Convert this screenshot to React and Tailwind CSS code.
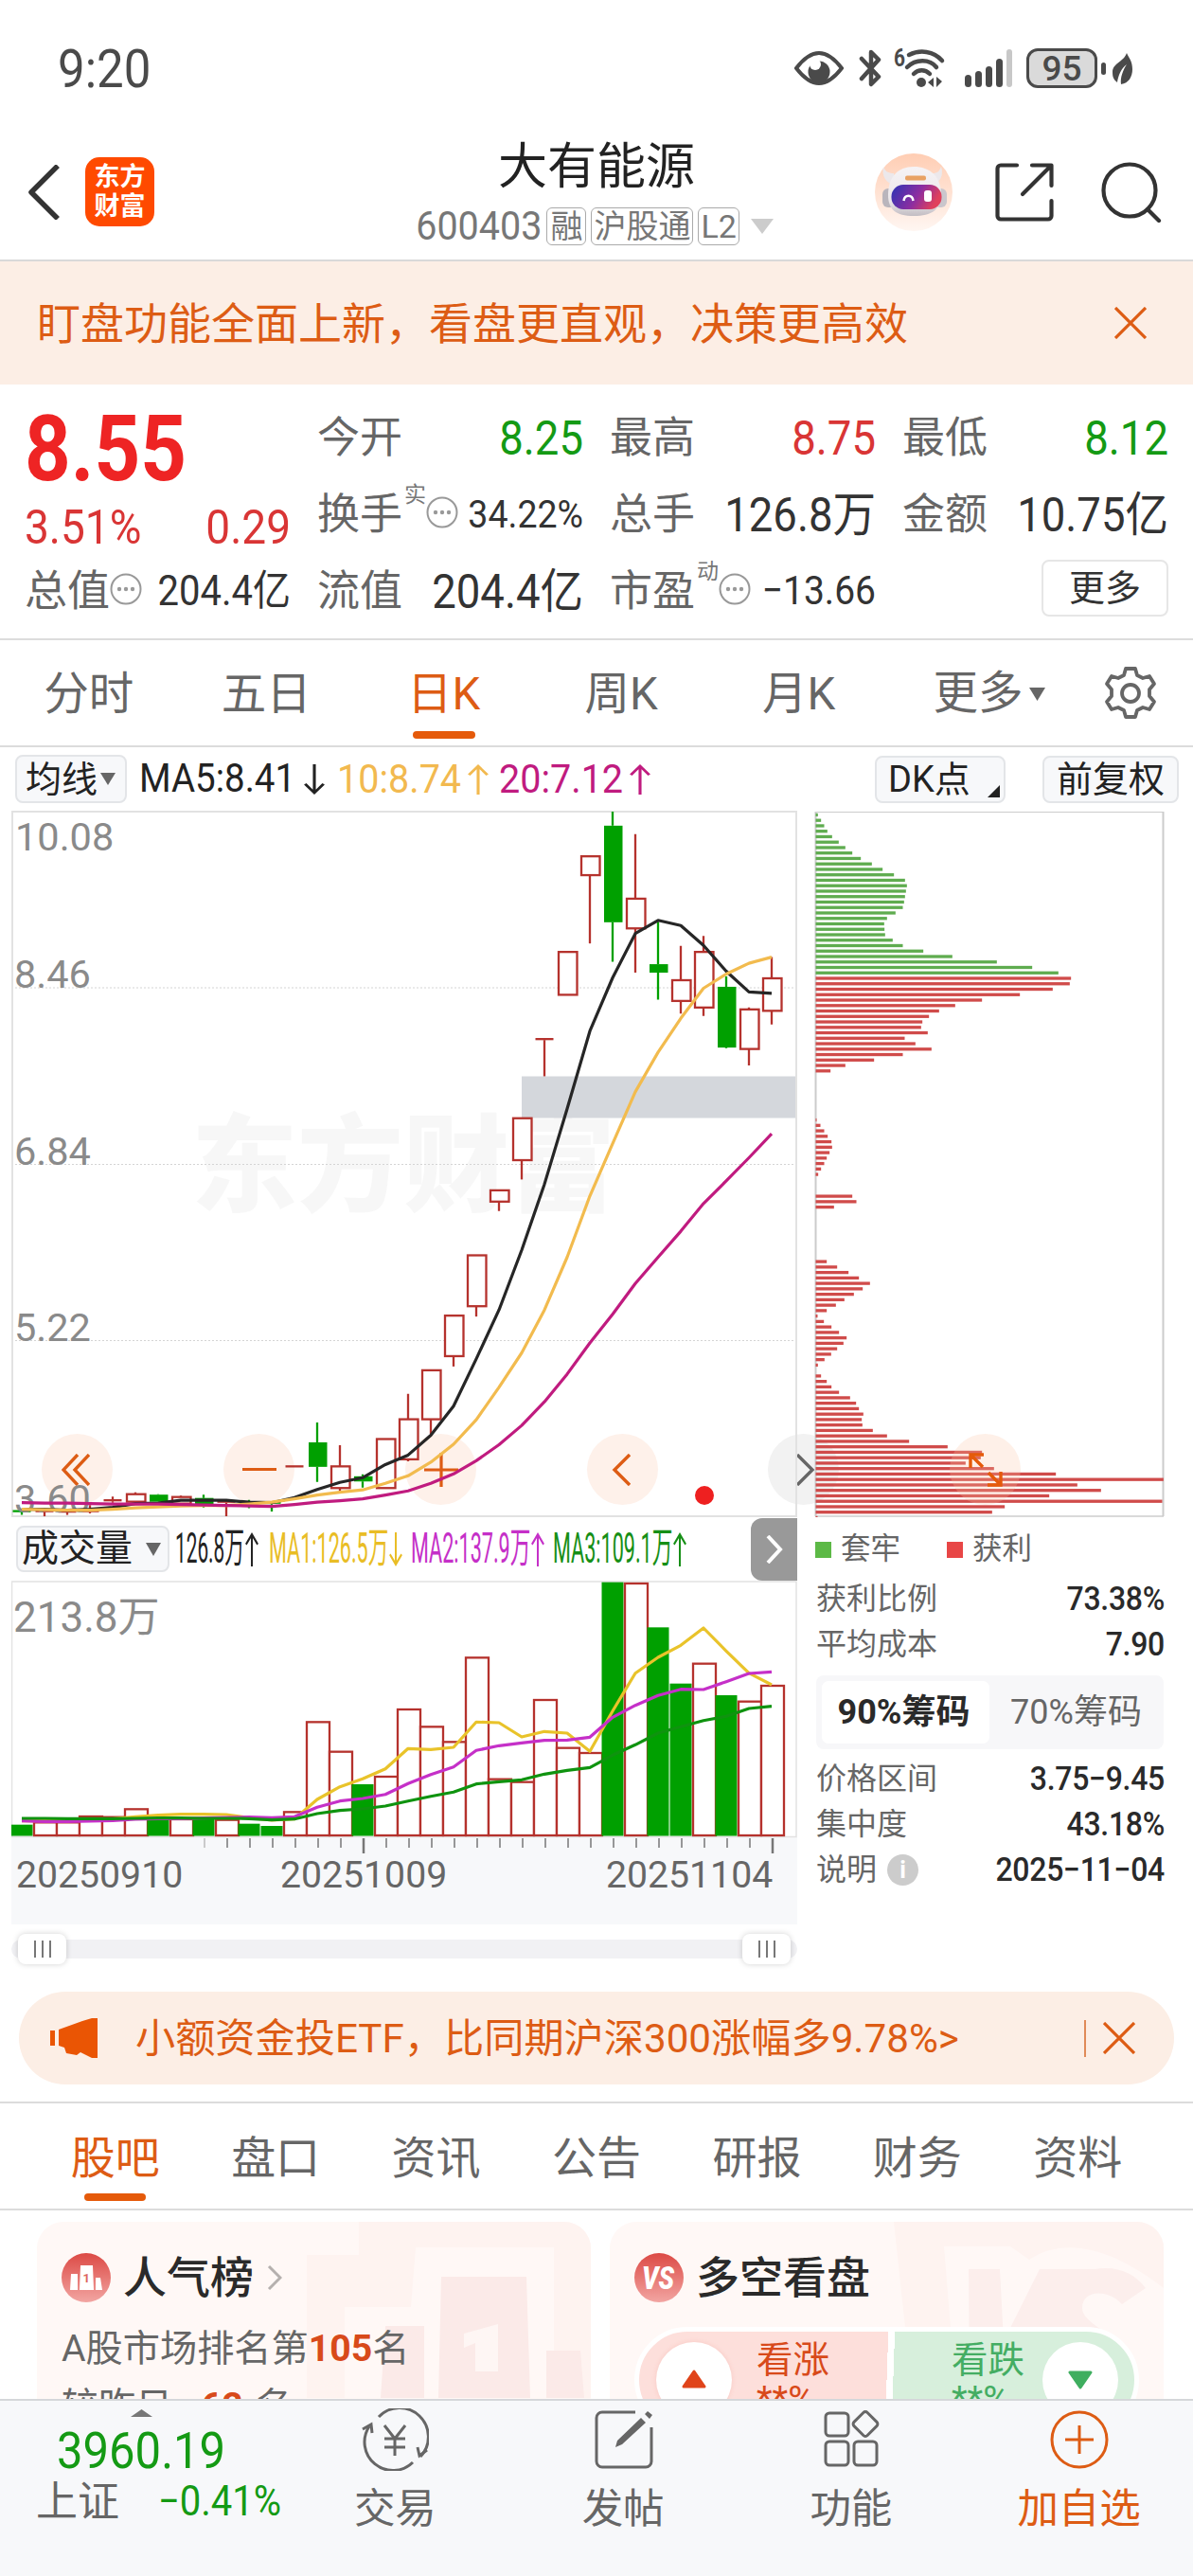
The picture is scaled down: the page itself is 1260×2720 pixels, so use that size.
import { FaCaretUp } from 'react-icons/fa';

const UP = '#b5322d';
const DOWN = '#00a000';

// [type, high, bodyTop, bodyBottom, low] in chart units
const candles = [
  ['g', 1518, 1519, 1521, 1527],
  ['r', 1519, 1519, 1521, 1530],
  ['r', 1520, 1520, 1522, 1527],
  ['r', 1506, 1519, 1521, 1524],
  ['r', 1488, 1496, 1498, 1501],
  ['r', 1479, 1483, 1499, 1499],
  ['g', 1483, 1484, 1499, 1499],
  ['r', 1486, 1489, 1503, 1503],
  ['g', 1484, 1491, 1504, 1511],
  ['r', 1498, 1499, 1501, 1530],
  ['g', 1495, 1501, 1504, 1513],
  ['g', 1499, 1501, 1504, 1520],
  ['r', 1424, 1424, 1426, 1426],
  ['g', 1331, 1373, 1425, 1457],
  ['r', 1379, 1424, 1470, 1477],
  ['g', 1441, 1445, 1456, 1469],
  ['r', 1366, 1366, 1470, 1470],
  ['r', 1270, 1324, 1409, 1413],
  ['r', 1220, 1220, 1324, 1355],
  ['r', 1104, 1104, 1190, 1212],
  ['r', 976, 976, 1084, 1106],
  ['r', 838, 838, 862, 882],
  ['r', 685, 685, 774, 815],
  ['r', 517, 517, 519, 596],
  ['r', 332, 332, 423, 423],
  ['r', 129, 129, 169, 314],
  ['g', 34, 64, 269, 353],
  ['r', 82, 219, 282, 376],
  ['g', 268, 358, 376, 433],
  ['r', 319, 392, 436, 463],
  ['r', 298, 332, 450, 468],
  ['g', 384, 406, 535, 537],
  ['r', 450, 454, 538, 573],
  ['r', 343, 388, 457, 486],
];

const ma5 = [1515, 1515, 1517, 1515, 1511, 1503, 1502, 1496, 1496, 1496, 1500, 1501, 1490, 1473, 1458, 1448, 1420, 1400, 1358, 1296, 1196, 1092, 965, 825, 665, 500, 387, 293, 265, 276, 318, 373, 417, 420];
const ma10 = [1515, 1516, 1517, 1517, 1515, 1512, 1510, 1508, 1507, 1507, 1504, 1500, 1493, 1485, 1479, 1474, 1460, 1444, 1415, 1377, 1325, 1256, 1183, 1092, 980, 850, 739, 629, 545, 473, 409, 379, 356, 343];
const ma20 = [1501, 1502, 1502, 1503, 1504, 1504, 1504, 1505, 1506, 1507, 1508, 1509, 1505, 1500, 1497, 1493, 1485, 1476, 1460, 1440, 1412, 1378, 1337, 1287, 1228, 1162, 1101, 1036, 980, 925, 866, 818, 769, 718];

const volumes = [980, 970, 970, 951, 953, 928, 960, 960, 960, 962, 977, 984, 937, 652, 746, 852, 825, 612, 667, 715, 448, 833, 842, 582, 734, 750, 212, 213, 355, 533, 467, 570, 587, 537];
const volMa1 = [968, 968, 967, 966, 962, 955, 950, 947, 947, 948, 958, 966, 962, 900, 860, 835, 803, 739, 742, 735, 655, 657, 702, 685, 690, 748, 620, 500, 450, 412, 357, 430, 500, 537];
const volMa2 = [968, 970, 970, 969, 967, 963, 961, 961, 959, 957, 956, 958, 955, 925, 905, 897, 884, 850, 821, 797, 745, 730, 721, 713, 712, 703, 640, 602, 571, 551, 552, 527, 501, 496];
const volMa3 = [960, 960, 961, 961, 961, 960, 959, 959, 960, 960, 961, 965, 962, 945, 935, 930, 921, 905, 890, 877, 851, 844, 838, 820, 808, 799, 760, 727, 690, 670, 650, 637, 612, 605];
const volType = 'grrrrrgrgrggrrrgrrrrrrrrrrgrggrgrr';

// chip distribution, one value per price level, 0 = nothing held
const chips = [
  7, 17, 27, 37, 52, 73, 94, 116, 143, 178, 212, 248, 283, 289, 286, 283, 280, 276, 253, 226, 217, 218, 220, 244, 276, 341, 433, 574, 686, 769,
  809, 805, 751, 647, 527, 442, 391, 359, 338, 334, 355, 282, 316, 367, 276, 185, 94, 47, 0, 0, 0, 0, 0, 0, 0, 0,
  3, 15, 27, 38, 50, 52, 44, 35, 27, 17, 8, 0, 0, 0, 116, 129, 58, 0, 0, 0, 0, 0, 0, 0, 0, 0,
  35, 68, 104, 137, 172, 149, 121, 91, 64, 35, 6, 26, 50, 74, 98, 88, 68, 49, 28, 7, 0,
  17, 35, 50, 74, 109, 128, 137, 151, 146, 148, 181, 226, 296, 418, 527, 523, 475, 565, 761, 1102, 829, 904, 740, 1098, 599, 559, 6,
];

const cx = (i) => 23 + i * 24;
const py = (v) => 840 + v / 2.0103;
const vy = (v) => 1600 + v / 3;
const points = (list, y) => list.map((v, i) => `${cx(i)},${y(v).toFixed(1)}`).join(' ');

const Num = ({ className = '', children }) => (
  <span className={`inline-block scale-y-110 whitespace-nowrap ${className}`}>{children}</span>
);

const Arrow = ({ down, className = 'w-[17px] h-[34px]' }) => (
  <svg viewBox="0 0 17 34" preserveAspectRatio="none" className={`${className} ${down ? 'rotate-180' : ''}`} fill="none" stroke="currentColor" strokeWidth="2.4">
    <path d="M8.5 34V2M1 12l7.500-10 7.500 10" />
  </svg>
);

const Triangle = ({ className }) => (
  <svg viewBox="0 0 16 13" preserveAspectRatio="none" className={className} fill="currentColor">
    <path d="M0 0h16L8 13z" />
  </svg>
);

const Dots = () => (
  <svg viewBox="0 0 34 34" className="-mt-[5px] w-[34px] h-[34px] shrink-0" fill="#999">
    <circle cx="17" cy="17" r="15.500" fill="none" stroke="#999" strokeWidth="2" />
    <circle cx="10" cy="17" r="2.200" />
    <circle cx="17" cy="17" r="2.200" />
    <circle cx="24" cy="17" r="2.200" />
  </svg>
);

const Cross = ({ className }) => (
  <svg viewBox="0 0 34 34" className={className} fill="none" stroke="#dd5c14" strokeWidth="3.200">
    <path d="M1 1l32 32M33 1L1 33" />
  </svg>
);

const StatusBar = () => (
  <div className="flex h-[144px] shrink-0 items-center pl-[61px] pr-[64px] text-[#4a4a4a]">
    <Num className="text-[51px] leading-none">9:20</Num>
    <div className="ml-auto flex items-center">
      <svg viewBox="0 0 52 36" className="w-[52px] h-[36px]">
        <path d="M2 18C12 5 20 2 26 2s14 3 24 16C40 31 32 34 26 34S12 31 2 18z" fill="none" stroke="#4a4a4a" strokeWidth="4" />
        <circle cx="26" cy="22" r="11.500" fill="#4a4a4a" />
        <circle cx="22" cy="14" r="6" fill="#fff" />
      </svg>
      <svg viewBox="0 0 24 40" className="ml-4 w-[24px] h-[40px]" fill="none" stroke="#4a4a4a" strokeWidth="4.500" strokeLinecap="round" strokeLinejoin="round">
        <path d="M3 10l18 19-8 8V3l8 8L3 31" />
      </svg>
      <svg viewBox="0 0 56 42" className="ml-[12px] w-[56px] h-[42px] overflow-visible" fill="none" stroke="#4a4a4a" strokeWidth="4.500" strokeLinecap="round">
        <text x="1" y="19" fontSize="26" fontWeight="700" fill="#4a4a4a" stroke="none" textLength="12" lengthAdjust="spacingAndGlyphs">6</text>
        <path d="M17 7c12-6 26-4 35 6M15 20c9-9 24-9 31 0M22 27c5-5 12-5 17 0" />
        <circle cx="30" cy="36" r="5" fill="#4a4a4a" stroke="none" />
        <path d="M37 36l6-5v10zM52 35l-6-5v11z" fill="#4a4a4a" stroke="none" />
      </svg>
      <div className="ml-[20px] flex h-[40px] items-end gap-[4px]">
        <i className="h-[13px] w-[7px] rounded-full bg-[#4a4a4a]" />
        <i className="h-[17px] w-[7px] rounded-full bg-[#4a4a4a]" />
        <i className="h-[22px] w-[7px] rounded-full bg-[#4a4a4a]" />
        <i className="h-[30px] w-[7px] rounded-full bg-[#4a4a4a]" />
        <i className="h-[40px] w-[6px] rounded-full bg-[#c8c8c8]" />
      </div>
      <div className="ml-[15px] flex h-[42px] w-[75px] items-center justify-center rounded-[12px] border-[3px] border-[#4a4a4a] bg-[#dadada] text-[37px] font-medium leading-none">95</div>
      <i className="ml-1 h-[13px] w-[5px] rounded-full bg-[#4a4a4a]" />
      <svg viewBox="0 0 21 33" className="ml-[7px] w-[21px] h-[33px]" fill="#4a4a4a">
        <path d="M15 0c2 5 6 8 6 17 0 8-4 15-12 16C8 26 11 18 15 12 9 16 6 24 5 31 1 28 0 25 0 20 0 11 12 9 15 0z" />
      </svg>
    </div>
  </div>
);

const Robot = () => (
  <svg viewBox="0 0 82 82" className="w-[82px] h-[82px]">
    <defs>
      <linearGradient id="halo" x1="0" y1="0" x2="0" y2="1">
        <stop offset="0" stopColor="#ffcdb3" />
        <stop offset="1" stopColor="#fff6f2" />
      </linearGradient>
      <linearGradient id="visor" x1="0" y1="0" x2="1" y2="0.3">
        <stop offset="0" stopColor="#2b35b5" />
        <stop offset="0.6" stopColor="#8d2da0" />
        <stop offset="1" stopColor="#e0405c" />
      </linearGradient>
      <linearGradient id="shell" x1="0" y1="0" x2="0" y2="1">
        <stop offset="0" stopColor="#f6f3f5" />
        <stop offset="0.7" stopColor="#ebe7ea" />
        <stop offset="1" stopColor="#c2bdc3" />
      </linearGradient>
    </defs>
    <circle cx="41" cy="41" r="41" fill="url(#halo)" />
    <rect x="8" y="37" width="14" height="20" rx="6" fill="#b9b5bc" />
    <rect x="62" y="37" width="14" height="20" rx="6" fill="#cac6cc" />
    <path d="M9 14c2 5 5 7 11 7l2 12c-11-1-15-10-13-19zM70 14c-2 5-4 7-9 7l-2 12c10-1 14-10 11-19z" fill="#ece8eb" />
    <path d="M41 14c17 0 29 10 29 30 0 15-10 22-29 22S14 59 14 44c0-19 10-30 27-30z" fill="url(#shell)" />
    <rect x="32" y="23.500" width="22" height="5" rx="2" fill="#e9a264" />
    <rect x="17.500" y="33" width="53" height="26" rx="12.500" fill="url(#visor)" />
    <path d="M30.500 50c1-7 9-7 10 0" fill="none" stroke="#fff" strokeWidth="2.500" />
    <rect x="52" y="39" width="8" height="12" rx="3" fill="#fff" />
  </svg>
);

const Header = () => (
  <div className="grid h-[132px] shrink-0 grid-cols-[1fr_auto_1fr] items-center border-b-2 border-[#d9d9d9] pb-[13px]">
    <div className="flex items-center gap-[27px] pl-[29px]">
      <svg viewBox="0 0 34 58" className="w-[34px] h-[58px]" fill="none" stroke="#333" strokeWidth="5.500" strokeLinejoin="round">
        <path d="M32 1L4 29l28 28" />
      </svg>
      <div className="flex h-[73px] w-[73px] flex-col items-center justify-center rounded-[15px] bg-[#ff4a00] text-[27px] font-bold leading-[31px] text-white">
        <span>东方</span>
        <span>财富</span>
      </div>
    </div>
    <div className="flex flex-col items-center gap-[16px] pt-[4px] leading-none">
      <h1 className="text-[52px] leading-none text-[#222]">大有能源</h1>
      <div className="flex h-[40px] items-center gap-[5px] pr-[4px] text-[#777]">
        <Num className="text-[39.500px] leading-none">600403</Num>
        <span className="rounded-[6px] border border-[#aaa] px-[3px] py-[2px] text-[34px] leading-[34px]">融</span>
        <span className="rounded-[6px] border border-[#aaa] px-[2px] py-[2px] text-[34px] leading-[34px]">沪股通</span>
        <span className="rounded-[6px] border border-[#aaa] px-[2px] py-[2px] text-[34px] leading-[34px]">L2</span>
        <Triangle className="ml-[7px] w-[24px] h-[16px] text-[#ccc]" />
      </div>
    </div>
    <div className="flex items-center justify-end pr-[33px]">
      <Robot />
      <svg viewBox="0 0 62 62" className="ml-[45px] w-[62px] h-[62px]" fill="none" stroke="#333" strokeWidth="4.200" strokeLinecap="round" strokeLinejoin="round">
        <path d="M23 2.500H6a3.500 3.500 0 0 0-3.500 3.500v50a3.500 3.500 0 0 0 3.500 3.500h50a3.500 3.500 0 0 0 3.500-3.500V40M39 2.500h20.500V24M59 3L29 33" />
      </svg>
      <svg viewBox="0 0 64 64" className="ml-[50px] w-[64px] h-[64px]" fill="none" stroke="#333" strokeWidth="4.200" strokeLinecap="round">
        <circle cx="30" cy="30" r="27.500" />
        <path d="M49 50l12 12" />
      </svg>
    </div>
  </div>
);

const Banner = () => (
  <div className="flex h-[130px] shrink-0 items-center justify-between bg-[#fceee5] pl-[39px] pr-[49px]">
    <span className="pt-[2px] text-[46px] leading-none text-[#dd5c14]">盯盘功能全面上新，看盘更直观，决策更高效</span>
    <Cross className="w-[34px] h-[34px]" />
  </div>
);

const Quote = ({ label, sup, dots, value, color = 'text-[#333]', size = 'text-[45.500px]' }) => (
  <div className="flex h-[81px] items-center leading-none">
    <span className="text-[45px] text-[#666]">{label}</span>
    {sup && <span className="mb-[42px] ml-[2px] text-[23px] text-[#777]">{sup}</span>}
    {dots && <Dots />}
    <Num className={`ml-auto leading-none ${size} ${color}`}>{value}</Num>
  </div>
);

const QuotePanel = () => (
  <div className="grid h-[270px] shrink-0 grid-cols-4 gap-7 border-b-2 border-[#dcdcdc] pl-[26px] pr-[26px]">
    <div className="pt-[27px]">
      <div className="flex h-[82px] items-center text-[85px] font-bold leading-none text-[#ee2424]">
        <span className="inline-block scale-y-[1.14]">8.55</span>
      </div>
      <div className="flex h-[82px] items-center justify-between text-[46px] leading-none text-[#d93535]">
        <Num>3.51%</Num>
        <Num>0.29</Num>
      </div>
      <div className="-mt-[13px]">
        <Quote label="总值" dots value="204.4亿" size="text-[40px]" />
      </div>
    </div>
    <div className="pt-[16px]">
      <Quote label="今开" value="8.25" color="text-[#149a14]" />
      <Quote label="换手" sup="实" dots value="34.22%" size="text-[37.500px]" />
      <Quote label="流值" value="204.4亿" />
    </div>
    <div className="pt-[16px]">
      <Quote label="最高" value="8.75" color="text-[#d93535]" />
      <Quote label="总手" value="126.8万" />
      <Quote label="市盈" sup="动" dots value="−13.66" size="text-[39px]" />
    </div>
    <div className="pt-[16px]">
      <Quote label="最低" value="8.12" color="text-[#149a14]" />
      <Quote label="金额" value="10.75亿" />
      <div className="mt-[7px] ml-auto flex h-[60px] w-[134px] items-center justify-center rounded-[8px] border-2 border-[#e6e6e6] text-[38px] leading-none text-[#333]">更多</div>
    </div>
  </div>
);

const periods = ['分时', '五日', '日K', '周K', '月K'];

const PeriodTabs = () => (
  <div className="flex h-[113px] shrink-0 border-b-2 border-[#dcdcdc] text-[47.500px] leading-none text-[#666]">
    {periods.map((name) => (
      <div key={name} className={`flex w-[187.500px] flex-col items-center pt-[34px] ${name === '日K' ? 'text-[#dd5c14]' : ''}`}>
        <span>{name}</span>
        {name === '日K' && <i className="mt-[14px] h-[8px] w-[66px] rounded-full bg-[#e55a0a]" />}
      </div>
    ))}
    <div className="flex items-center pt-[3px] pl-[48px]">
      <span>更多</span>
      <Triangle className="ml-[6px] w-[17px] h-[14px]" />
    </div>
    <svg viewBox="0 0 56 56" className="mt-[28px] ml-auto mr-[38px] w-[56px] h-[56px]" fill="none" stroke="#666" strokeWidth="3.800" strokeLinejoin="round">
      <path d="M23 2h10l2 7 6 3 7-2 5 8-5 6v7l5 6-5 8-7-2-6 3-2 7H23l-2-7-6-3-7 2-5-8 5-6v-7l-5-6 5-8 7 2 6-3z" />
      <circle cx="28" cy="28" r="9" />
    </svg>
  </div>
);

const MaRow = () => (
  <div className="flex h-[67px] shrink-0 items-center pl-[16px] pr-[15px] text-[38px] leading-none">
    <div className="flex h-[51px] w-[118px] items-center rounded-[8px] border-2 border-[#e3e5e8] bg-[#f7f8fa] pl-[9px] text-[#222]">
      均线
      <Triangle className="ml-[3px] w-[16px] h-[13px] text-[#666]" />
    </div>
    <div className="ml-[13px] flex items-center text-[#222]">
      <Num className="text-[38.500px]">MA5:8.41</Num>
      <Arrow down className="ml-[9px] w-[22px] h-[32px]" />
    </div>
    <div className="ml-[13px] flex items-center text-[#f2b94f]">
      <Num className="text-[39.500px]">10:8.74</Num>
      <Arrow className="ml-[7px] w-[22px] h-[32px]" />
    </div>
    <div className="ml-[11px] flex items-center text-[#c01b7f]">
      <Num className="text-[39.500px]">20:7.12</Num>
      <Arrow className="ml-[7px] w-[22px] h-[32px]" />
    </div>
    <div className="ml-auto flex h-[50px] w-[138px] items-center rounded-[8px] border-2 border-[#e3e5e8] bg-[#f7f8fa] pl-[12px] text-[#222]">
      DK点
      <svg viewBox="0 0 13 13" className="mt-[25px] ml-auto mr-[4px] w-[13px] h-[13px]" fill="#222">
        <path d="M13 0v13H0z" />
      </svg>
    </div>
    <div className="ml-[39px] flex h-[50px] w-[144px] items-center justify-center rounded-[8px] border-2 border-[#e3e5e8] bg-[#f7f8fa] text-[#222]">前复权</div>
  </div>
);

const PriceChart = () => (
  <svg viewBox="12 856 830 746" className="block w-[830px] h-[746px]">
    <text x="202" y="1271" fontSize="112" fontWeight="900" fill="#000" fillOpacity="0.03">东方财富</text>
    {[1043, 1229.5, 1415.5].map((y) => (
      <path key={y} d={`M12 ${y}H841`} stroke="#d4d4d4" strokeWidth="1" strokeDasharray="2 2" />
    ))}
    <rect x="551" y="1136.500" width="290" height="44" fill="#d4d7dc" />
    <rect x="13" y="857" width="828" height="744" fill="none" stroke="#e2e2e2" strokeWidth="2" />
    {candles.map(([type, high, top, bottom, low], i) => {
      const x = cx(i);
      const red = type === 'r';
      const flat = bottom - top < 4;
      return (
        <g key={i} stroke={red ? UP : DOWN} strokeWidth="2.3">
          <path d={`M${x} ${py(high)}V${py(top)}M${x} ${py(bottom)}V${py(low)}`} />
          {flat ? (
            <path d={`M${x - 9.5} ${py(top)}h19`} />
          ) : (
            <rect x={x - 9} y={py(top)} width="19.500" height={py(bottom) - py(top)} fill={red ? '#fff' : DOWN} stroke={red ? UP : 'none'} />
          )}
        </g>
      );
    })}
    <g fontSize="41.500" fill="#8a8a8a">
      <text x="16" y="898">10.08</text>
      <text x="15" y="1043">8.46</text>
      <text x="15" y="1230">6.84</text>
      <text x="15" y="1416">5.22</text>
      <text x="15" y="1597">3.60</text>
    </g>
    <g fill="none" strokeWidth="3.200" strokeLinejoin="round">
      <polyline points={points(ma5, py)} stroke="#262626" />
      <polyline points={points(ma10, py)} stroke="#f2bb4e" />
      <polyline points={points(ma20, py)} stroke="#c01b7f" />
    </g>
  </svg>
);

const volumeMas = [
  { text: '126.8万', color: 'text-[#222]', box: 'w-[74px]', squeeze: 'scale-x-[0.52]', gap: 'ml-[6px]' },
  { text: 'MA1:126.5万', color: 'text-[#e9bd25]', box: 'w-[127px]', squeeze: 'scale-x-[0.54]', gap: 'ml-[11px]', down: true },
  { text: 'MA2:137.9万', color: 'text-[#c530c8]', box: 'w-[127px]', squeeze: 'scale-x-[0.54]', gap: 'ml-[9px]' },
  { text: 'MA3:109.1万', color: 'text-[#168f16]', box: 'w-[127px]', squeeze: 'scale-x-[0.54]', gap: 'ml-[9px]' },
];

const VolumeHeader = () => (
  <div className="flex h-[67px] items-center pl-[5px] leading-none">
    <div className="flex h-[49px] w-[162px] items-center rounded-[8px] border-2 border-[#e3e5e8] bg-[#f7f8fa] pl-[4px] text-[39px] text-[#222]">
      成交量
      <Triangle className="ml-[14px] w-[16px] h-[14px] text-[#666]" />
    </div>
    {volumeMas.map((ma) => (
      <div key={ma.text} className={`flex items-center ${ma.color} ${ma.gap}`}>
        <span className={ma.box}>
          <span className={`inline-block origin-left scale-y-110 whitespace-nowrap text-[40px] leading-none ${ma.squeeze}`}>{ma.text}</span>
        </span>
        <Arrow down={ma.down} className="w-[14px] h-[36px] shrink-0" />
      </div>
    ))}
    <div className="ml-auto flex h-[66px] w-[49px] items-center justify-center rounded-l-[12px] bg-[#999]">
      <svg viewBox="0 0 18 30" className="w-[18px] h-[30px]" fill="none" stroke="#fff" strokeWidth="4">
        <path d="M2 1l13 14L2 29" />
      </svg>
    </div>
  </div>
);

const VolumeChart = () => (
  <svg viewBox="12 1669 830 363" className="block w-[830px] h-[363px]">
    <rect x="12" y="1940" width="830" height="92" fill="#f7f8fa" />
    <rect x="12.500" y="1670" width="828.500" height="269.500" fill="none" stroke="#e2e2e2" strokeWidth="1.500" />
    <text x="14" y="1723" fontSize="44" fill="#8a8a8a">213.8万</text>
    {volumes.map((v, i) => {
      const red = volType[i] === 'r';
      return (
        <rect
          key={i}
          x={cx(i) - (red ? 11 : 11.5)}
          y={vy(v) + (red ? 1 : 0)}
          width={red ? 24 : 23}
          height={1938.5 - vy(v) - (red ? 1.5 : 0)}
          fill={red ? '#fff' : DOWN}
          stroke={red ? UP : 'none'}
          strokeWidth="2.300"
        />
      );
    })}
    <g fill="none" strokeWidth="3.200" strokeLinejoin="round">
      <polyline points={points(volMa1, vy)} stroke="#e9c32a" />
      <polyline points={points(volMa2, vy)} stroke="#c530c8" />
      <polyline points={points(volMa3, vy)} stroke="#0f930f" />
    </g>
    {volumes.map((_, i) => {
      const major = i === 15 || i === 33;
      return i >= 8 && <path key={i} d={`M${cx(i) + 1} 1941v${major ? 16 : 10}`} stroke={i === 8 ? '#bbb' : '#777'} strokeWidth={major ? 2.5 : 1.5} />;
    })}
    <g fontSize="39.200" fill="#666">
      <text x="17" y="1993">20250910</text>
      <text x="296" y="1993">20251009</text>
      <text x="640" y="1993">20251104</text>
    </g>
  </svg>
);

const Handle = () => (
  <div className="flex h-[32px] w-[51px] items-center justify-center gap-[6px] rounded-[8px] bg-white shadow-[0_0_6px_rgba(0,0,0,0.18)]">
    <i className="h-[18px] w-[2px] bg-[#777]" />
    <i className="h-[18px] w-[2px] bg-[#777]" />
    <i className="h-[18px] w-[2px] bg-[#777]" />
  </div>
);

const RangeSlider = () => (
  <div className="flex h-[51px] items-center">
    <div className="flex h-[20px] w-[830px] items-center justify-between rounded-full bg-[#f1f1f4] px-[7px]">
      <Handle />
      <Handle />
    </div>
  </div>
);

const ChipChart = () => (
  <svg viewBox="860 856 370 746" className="block w-[370px] h-[746px]">
    <path d="M861 857.500H1229" stroke="#ccc" strokeWidth="1" />
    <path d="M861 1601H1229" stroke="#ccc" strokeWidth="1.500" />
    <path d="M861.500 857v744M1228.500 857v744" stroke="#ccc" strokeWidth="2" />
    {chips.map((c, i) => (
      c > 0 && <rect key={i} x="861.500" y={858.8 + i * 5.752} width={c / 3} height="3.300" fill={i < 30 ? '#5fac4f' : '#d04b4a'} />
    ))}
  </svg>
);

const Row = ({ label, value, info }) => (
  <div className="flex h-[48px] items-center text-[32px] leading-none text-[#666]">
    <span>{label}</span>
    {info && <span className="ml-[11px] flex h-[33px] w-[33px] items-center justify-center rounded-full bg-[#ccc] text-[25px] font-bold text-white">i</span>}
    <Num className="ml-auto font-medium tracking-[-0.300px] text-[#2a2a2a]">{value}</Num>
  </div>
);

const ChipPanel = () => (
  <div className="relative w-[370px]">
    <ChipChart />
    <div className="flex h-[62px] items-center pt-[6px] pl-[1px] text-[31.500px] leading-none text-[#666]">
      <i className="h-[17px] w-[17px] bg-[#5cb946]" />
      <span className="ml-[10px]">套牢</span>
      <i className="ml-[49px] h-[17px] w-[17px] bg-[#e84646]" />
      <span className="ml-[10px]">获利</span>
    </div>
    <div className="pl-[2px]">
      <Row label="获利比例" value="73.38%" />
      <Row label="平均成本" value="7.90" />
    </div>
    <div className="mt-[9px] ml-[2px] flex h-[78px] w-[367px] items-center rounded-[8px] bg-[#f7f7f9] p-[6px] text-[36px] leading-none">
      <span className="flex h-full w-[177px] items-center justify-center rounded-[7px] bg-white pr-[4px] font-bold text-[#2a2a2a]">90%筹码</span>
      <span className="flex flex-1 items-center justify-center pl-[5px] text-[#666]">70%筹码</span>
    </div>
    <div className="mt-[7px] pl-[2px]">
      <Row label="价格区间" value="3.75−9.45" />
      <Row label="集中度" value="43.18%" />
      <Row label="说明" value="2025−11−04" info />
    </div>
  </div>
);

const ctrl = 'absolute top-[658px] flex h-[75px] w-[75px] items-center justify-center rounded-full';

const ChartArea = () => (
  <div className="relative flex h-[1227px] shrink-0 gap-[18px] pl-3">
    {/* chart controls sit under the curves */}
    <div className={`${ctrl} left-[44px] bg-[#fef1ea]`}>
      <svg viewBox="0 0 30 34" className="mr-[4px] w-[30px] h-[34px]" fill="none" stroke="#dd5c14" strokeWidth="3.400">
        <path d="M17 1L2 17l15 16M29 1L14 17l15 16" />
      </svg>
    </div>
    <div className={`${ctrl} left-[236px] bg-[#fef1ea]`}>
      <i className="h-[3px] w-[36px] bg-[#dd5c14]" />
    </div>
    <div className={`${ctrl} left-[428px] bg-[#fef1ea]`}>
      <svg viewBox="0 0 36 36" className="w-[36px] h-[36px]" stroke="#dd5c14" strokeWidth="3.200">
        <path d="M0 18h36M18 0v36" />
      </svg>
    </div>
    <div className={`${ctrl} left-[620px] bg-[#fef1ea]`}>
      <svg viewBox="0 0 20 34" className="mr-[4px] w-[20px] h-[34px]" fill="none" stroke="#dd5c14" strokeWidth="3.400">
        <path d="M19 1L3 17l16 16" />
      </svg>
    </div>
    <div className={`${ctrl} left-[811px] bg-[#f2f2f2]`}>
      <svg viewBox="0 0 20 34" className="ml-[4px] w-[20px] h-[34px]" fill="none" stroke="#666" strokeWidth="3.400">
        <path d="M1 1l16 16L1 33" />
      </svg>
    </div>

    <div className="relative w-[830px]">
      <PriceChart />
      <VolumeHeader />
      <VolumeChart />
      <RangeSlider />
    </div>
    <ChipPanel />

    <div className={`${ctrl} left-[1003px] bg-[#fbc3a4]/25`}>
      <svg viewBox="0 0 36 36" className="w-[36px] h-[36px]" fill="none" stroke="#e55a0a" strokeWidth="3.400">
        <path d="M2 16V2h14M2 2l13 13M34 20v14H20M34 34L21 21" />
      </svg>
    </div>
    <i className="absolute top-[713px] left-[734px] h-[20px] w-[20px] rounded-full bg-[#ee2020]" />
  </div>
);

const Promo = () => (
  <div className="mx-5 mt-5 flex h-[98px] shrink-0 items-center rounded-full bg-[#fceee5] pl-[33px] pr-[41px] text-[#dd5c14]">
    <svg viewBox="0 0 50 42" className="w-[50px] h-[42px]" fill="#ea5504">
      <path d="M0 13h5v16H0zM9 12l25-9 10-3h6v42h-6l-12-6-4 3-11-2-2-6-6-2z" />
    </svg>
    <span className="ml-[40px] pt-[2px] whitespace-nowrap text-[42.200px] leading-none">小额资金投ETF，比同期沪深300涨幅多9.78%&gt;</span>
    <i className="ml-auto h-[39px] w-[2px] bg-[#e08a58]" />
    <Cross className="ml-[18px] w-[34px] h-[34px]" />
  </div>
);

const sections = ['股吧', '盘口', '资讯', '公告', '研报', '财务', '资料'];

const SectionTabs = () => (
  <div className="mt-[18px] flex h-[115px] shrink-0 border-y-2 border-[#dcdcdc] px-[37px] text-[47px] leading-none text-[#666]">
    {sections.map((name, i) => (
      <div key={name} className={`flex w-[169.500px] flex-col items-center pt-[34px] ${i === 0 ? 'text-[#dd5c14]' : ''}`}>
        <span>{name}</span>
        {i === 0 && <i className="mt-[14px] h-[8px] w-[65px] rounded-full bg-[#e55a0a]" />}
      </div>
    ))}
  </div>
);

const RankCard = () => (
  <div className="relative h-[240px] w-[585px] overflow-hidden rounded-[28px] bg-[#fff8f6]">
    <svg viewBox="0 0 585 186" className="absolute top-0 left-0 w-[585px] h-[186px]">
      <path d="M340 0h245v186H285V35h55z" fill="#fef3f0" />
      <path d="M400 27h146v159H325V90h70z" fill="#fff8f6" />
      <path d="M427 58h90l4 128H424zM368 110h41v76h-46zM538 136h36l4 50h-40z" fill="#fbeae8" />
      <path d="M451 118l36-10v50h-24v-30l-12 5z" fill="#fef6f4" />
    </svg>
    <div className="relative px-[26px] pt-[32px] leading-none">
      <div className="flex h-[53px] items-center">
        <svg viewBox="0 0 52 52" className="w-[52px] h-[52px]">
          <defs>
            <linearGradient id="badge" x1="0" y1="0" x2="0" y2="1">
              <stop offset="0" stopColor="#dc4a45" />
              <stop offset="1" stopColor="#f2a5a2" />
            </linearGradient>
          </defs>
          <circle cx="26" cy="26" r="26" fill="url(#badge)" />
          <path d="M10 22h7v17H9zM20 13h13l1 26H19zM36 26h5l2 13h-7z" fill="#fff" />
          <text x="22.500" y="31" fontSize="13" fontWeight="700" fill="#dd6560">1</text>
        </svg>
        <span className="ml-[13px] text-[46px] font-medium text-[#2a2a2a]">人气榜</span>
        <svg viewBox="0 0 16 28" className="ml-[14px] w-[16px] h-[28px]" fill="none" stroke="#b5b0ae" strokeWidth="3">
          <path d="M2 2l12 12L2 26" />
        </svg>
      </div>
      <div className="mt-[30px] flex items-center text-[39.200px] text-[#666]">
        A股市场排名第<b className="text-[#d84a1a]">105</b>名
      </div>
      <div className="mt-[22px] flex h-[39px] items-center text-[39px] text-[#666]">
        较昨日<FaCaretUp size={30} className="-mt-[8px] text-[#d84a1a]" /><b className="mr-[13px] text-[#d84a1a]">62</b>名
      </div>
    </div>
  </div>
);

const VoteCard = () => (
  <div className="relative h-[240px] w-[585px] overflow-hidden rounded-[28px] bg-[#fff8f6]">
    <svg viewBox="0 0 585 186" className="absolute top-0 left-0 w-[585px] h-[186px]">
      <path d="M300 0h285v186H320z" fill="#fef3f0" />
      <path d="M353 26h70l20 14c40-26 90-10 142 30v116H366z" fill="#fff8f6" />
      <path d="M379 50h33l4 76 38-76h58c24-4 42 4 54 20l-25 17c-14-16-42-16-42 4 0 22 58 26 56 95H380z" fill="#fceeec" />
    </svg>
    <div className="relative pt-[32px] leading-none">
      <div className="flex h-[53px] items-center pl-[26px]">
        <svg viewBox="0 0 52 52" className="w-[52px] h-[52px]">
          <circle cx="26" cy="26" r="26" fill="url(#badge)" />
          <text x="8" y="38" fontSize="33" fontWeight="900" fontStyle="italic" fill="#fff" textLength="34" lengthAdjust="spacingAndGlyphs">VS</text>
        </svg>
        <span className="ml-[13px] text-[46px] font-medium text-[#2a2a2a]">多空看盘</span>
      </div>
      <div className="mt-[26px] ml-[26px] flex h-[112px] w-[533px] overflow-hidden rounded-full border-[5px] border-white bg-[linear-gradient(92deg,#fddfdb_50%,#fff_50%,#fff_51.3%,#d7efdc_51.3%)] text-[38.500px]">
        <div className="ml-[18px] mt-[11px] flex h-[80px] w-[80px] items-center justify-center rounded-full bg-white shadow-[0_0_5px_rgba(220,80,60,0.15)]">
          <svg viewBox="0 0 26 20" className="mb-[3px] w-[26px] h-[20px]" fill="#e0441a" stroke="#e0441a" strokeWidth="3" strokeLinejoin="round">
            <path d="M13 2L24 18H2z" />
          </svg>
        </div>
        <div className="ml-[26px] mt-[11px] text-[#d84a1a]">
          <div>看涨</div>
          <div className="mt-[3px]">**%</div>
        </div>
        <div className="ml-[129px] mt-[11px] text-[#44ad63]">
          <div>看跌</div>
          <div className="mt-[3px]">**%</div>
        </div>
        <div className="ml-[19px] mt-[11px] flex h-[80px] w-[80px] items-center justify-center rounded-full bg-white">
          <svg viewBox="0 0 26 20" className="w-[26px] h-[20px]" fill="#3fae5f" stroke="#3fae5f" strokeWidth="3" strokeLinejoin="round">
            <path d="M13 18L2 2h22z" />
          </svg>
        </div>
      </div>
    </div>
  </div>
);

const NavItem = ({ label, className = 'text-[#666]', children }) => (
  <div className={`flex flex-1 flex-col items-center pt-[8px] ${className}`}>
    <svg viewBox="0 0 72 66" className="w-[72px] h-[66px]" fill="none" stroke="currentColor" strokeWidth="3">
      {children}
    </svg>
    <span className="mt-[19px] text-[43.500px] leading-none">{label}</span>
  </div>
);

const BottomBar = () => (
  <div className="flex h-[187px] shrink-0 border-t-2 border-[#d5d7da] bg-[#f7f8fa]">
    <div className="flex w-[297px] flex-col pt-[9px] leading-none">
      <Triangle className="ml-[138px] w-[23px] h-[8px] rotate-180 text-[#777]" />
      <Num className="mt-[11px] ml-[60px] self-start text-[49px] text-[#149a14]">3960.19</Num>
      <div className="mt-[8px] flex items-center pl-[38px] text-[44px] text-[#666]">
        上证
        <Num className="ml-auto text-[40px] text-[#149a14]">−0.41%</Num>
      </div>
    </div>
    <div className="flex flex-1">
      <NavItem label="交易">
        <path d="M19 9a30 30 0 0 1 44 42M55 57a30 30 0 0 1-46-38" />
        <path d="M2 22l9-5 1 9M70 44l-8 6-2-9" />
        <path d="M25 18l11 14 11-14M36 32v18M25 32h22M25 41h22" />
      </NavItem>
      <NavItem label="发帖">
        <path d="M49 4H14a6 6 0 0 0-6 6v46a6 6 0 0 0 6 6h46a6 6 0 0 0 6-6V20" />
        <path d="M28 41l2-7 25-24 5 5-25 23zM59 6l3-3 5 4-3 4z" fill="currentColor" stroke="none" />
      </NavItem>
      <NavItem label="功能">
        <rect x="9" y="5" width="24" height="24" rx="4" />
        <rect x="9" y="35" width="24" height="25" rx="4" />
        <rect x="39" y="35" width="24" height="25" rx="4" />
        <rect x="41" y="6.500" width="20" height="20" rx="3" transform="rotate(45 51 16.500)" />
      </NavItem>
      <NavItem label="加自选" className="text-[#dd5c14]">
        <circle cx="36" cy="33" r="29" />
        <path d="M21 33h30M36 18v30" />
      </NavItem>
    </div>
  </div>
);

const App = () => {
  return (
    <div className="flex h-[2720px] w-[1260px] flex-col overflow-hidden bg-white font-[Roboto,'Noto_Sans_CJK_SC',sans-serif]">
      <StatusBar />
      <Header />
      <Banner />
      <QuotePanel />
      <PeriodTabs />
      <MaRow />
      <ChartArea />
      <Promo />
      <SectionTabs />
      <div className="flex min-h-0 flex-1 gap-5 overflow-hidden pt-[12px] pl-[39px]">
        <RankCard />
        <VoteCard />
      </div>
      <BottomBar />
    </div>
  );
};

export default App;
